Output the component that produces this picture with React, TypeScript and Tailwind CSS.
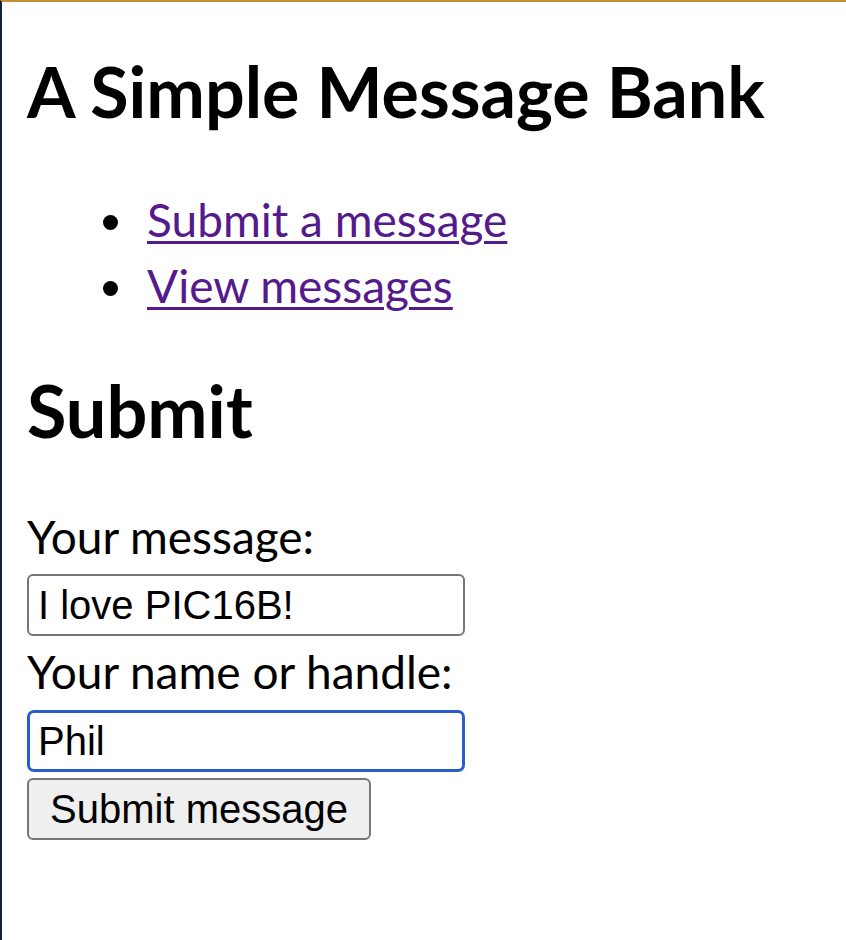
import { useState } from 'react'

const LINKS = ['Submit a message', 'View messages']

export default function App() {
  const [message, setMessage] = useState('I love PIC16B!')
  const [handle, setHandle] = useState('Phil')

  return (
    <div className="min-h-[940px] w-full border-t-2 border-l-2 border-t-[#c18f36] border-l-[#14213a] bg-white pl-[25px] font-['Lato',sans-serif] text-black">
      <h1 className="mt-[49px] text-[70px] font-bold leading-[80px]">A Simple Message Bank</h1>

      <ul className="mt-[56px]">
        {LINKS.map((label) => (
          <li key={label} className="flex h-[66px] items-center">
            <span className="ml-[76px] mt-[4px] h-[15px] w-[15px] shrink-0 rounded-full bg-black" />
            <a
              href="#"
              className="ml-[29px] text-[46px] leading-[66px] text-[#551a8b] underline decoration-[3px] underline-offset-[4px]"
            >
              {label}
            </a>
          </li>
        ))}
      </ul>

      <h2 className="mt-[51px] text-[72px] font-bold leading-[80px]">Submit</h2>

      <form className="flex flex-col items-start" onSubmit={(e) => e.preventDefault()}>
        <label htmlFor="message" className="mt-[57px] text-[46px] leading-[60px]">
          Your message:
        </label>
        <input
          id="message"
          value={message}
          onChange={(e) => setMessage(e.target.value)}
          className="mt-[7px] h-[62px] w-[438px] rounded-[6px] border-2 border-[#767676] px-[9px] font-['Liberation_Sans',Arial,sans-serif] text-[40px] outline-none"
        />
        <label htmlFor="handle" className="mt-[6px] text-[46px] leading-[60px]">
          Your name or handle:
        </label>
        <input
          id="handle"
          value={handle}
          onChange={(e) => setHandle(e.target.value)}
          className="mt-[8px] h-[62px] w-[438px] rounded-[7px] border-[3px] border-[#2a5ccc] px-[8px] font-['Liberation_Sans',Arial,sans-serif] text-[40px] outline-none"
        />
        <button
          type="submit"
          className="mt-[6px] h-[62px] w-[344px] rounded-[6px] border-2 border-[#767676] bg-[#efefef] font-['Liberation_Sans',Arial,sans-serif] text-[40px] leading-none"
        >
          Submit message
        </button>
      </form>
    </div>
  )
}
